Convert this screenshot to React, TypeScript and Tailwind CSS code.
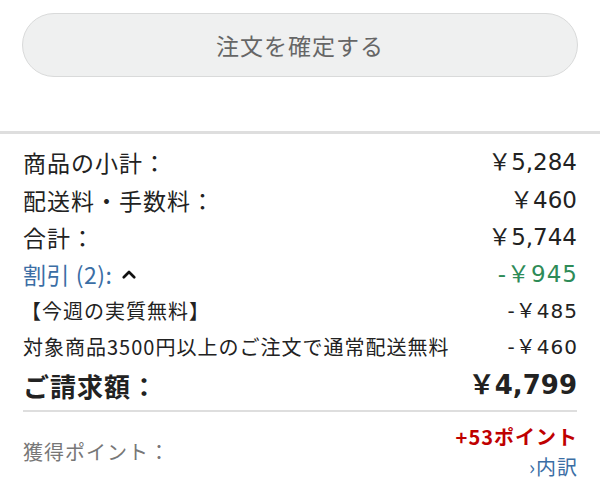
import React from "react";

function ChevronUp() {
  return (
    <svg className="w-[18px] h-[18px] ml-[8px]" viewBox="0 0 24 24" fill="none" stroke="#111" strokeWidth={3.6} strokeLinecap="round" strokeLinejoin="round">
      <path d="M5 15l7-7 7 7" />
    </svg>
  );
}

function Row({ label, value, className = "", valueClass = "" }: { label: React.ReactNode; value: string; className?: string; valueClass?: string }) {
  return (
    <div className={`flex items-center justify-between ${className}`}>
      <div className="flex items-center tracking-[1px]">{label}</div>
      <div className={`font-['DejaVu_Sans','Noto_Sans_CJK_JP',sans-serif] ${valueClass}`}>{value}</div>
    </div>
  );
}

export default function App() {
  return (
    <div className="w-[600px] h-[481px] bg-white overflow-hidden text-[#222] font-['Noto_Sans_CJK_JP','Noto_Sans',sans-serif]">
      <div className="px-[22px] pt-[13px]">
        <button className="w-full h-[64px] rounded-full bg-[#eff0f0] border border-[#d9dada] text-[23px] text-[#666] tracking-[1px]">
          注文を確定する
        </button>
      </div>
      <div className="mt-[54px] h-[3px] bg-[#dedede]" />
      <div className="px-[23px] pt-[10px]">
        <Row className="h-[37px] text-[23px]" label="商品の小計：" value="￥5,284" valueClass="text-[23px]" />
        <Row className="h-[38px] text-[23px]" label="配送料・手数料：" value="￥460" valueClass="text-[23px]" />
        <Row className="h-[37px] text-[23px]" label="合計：" value="￥5,744" valueClass="text-[23px]" />
        <Row
          className="h-[37px] text-[23px]"
          label={
            <>
              <span className="text-[#3b6ea5] tracking-[0.5px]">割引 (2):</span>
              <ChevronUp />
            </>
          }
          value="-￥945"
          valueClass="text-[23px] text-[#2e8b57] tracking-[1px] -mr-[1px]"
        />
        <Row className="h-[36px] text-[20px]" label={<span className="-ml-[2px]">【今週の実質無料】</span>} value="-￥485" valueClass="text-[20px] tracking-[1px] -mr-[1px]" />
        <Row className="h-[35px] text-[20px]" label="対象商品3500円以上のご注文で通常配送無料" value="-￥460" valueClass="text-[20px] tracking-[1px] -mr-[1px]" />
        <Row className="h-[42px] text-[26px] font-bold" label="ご請求額：" value="￥4,799" valueClass="text-[26px]" />
        <div className="mt-[4px] h-[2px] bg-[#dedede]" />
        <div className="flex items-center justify-between pt-[10px] tracking-[1px]">
          <div className="text-[20px] text-[#777]">獲得ポイント：</div>
          <div className="flex flex-col items-end -mr-[1px]">
            <div className="text-[20px] font-bold text-[#bf0000] leading-[30px]">+53ポイント</div>
            <div className="text-[20px] text-[#3b6ea5] leading-[30px]">›内訳</div>
          </div>
        </div>
      </div>
    </div>
  );
}
